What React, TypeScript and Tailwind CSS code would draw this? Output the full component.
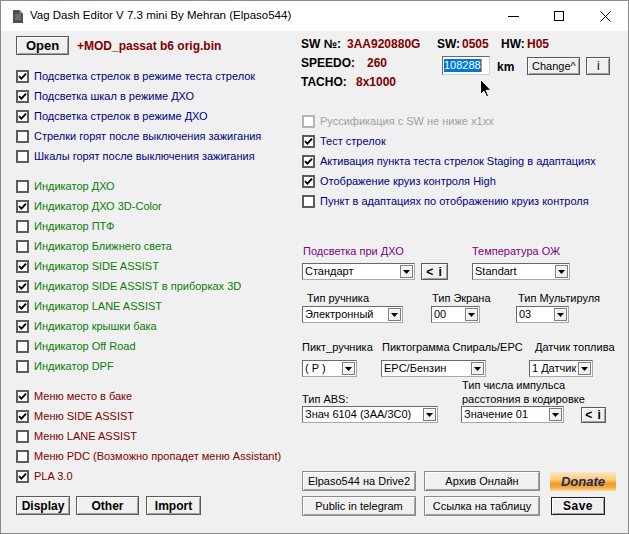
import React from "react";

const navy = "text-[#000080]";
const green = "text-[#0a7d0a]";
const red = "text-[#800000]";

function CheckMark() {
  return (
    <svg width="9" height="9" viewBox="0 0 9 9">
      <path d="M1 4.2 L3.4 6.6 L8 1.6" stroke="#000" strokeWidth="1.9" fill="none" />
    </svg>
  );
}

function Check({ checked, label, color, disabled }: { checked?: boolean; label: string; color: string; disabled?: boolean }) {
  return (
    <div className="h-[20px] flex items-center gap-[5px]">
      <div
        className={`w-[13px] h-[13px] border-2 bg-white flex items-center justify-center shrink-0 ${
          disabled ? "border-[#b4b4b4]" : "border-[#5c5c5c]"
        }`}
      >
        {checked ? <CheckMark /> : null}
      </div>
      <span className={`text-[11px] leading-none whitespace-nowrap ${color}`}>{label}</span>
    </div>
  );
}

function Btn({ children, className }: { children: React.ReactNode; className: string }) {
  return (
    <div
      className={`bg-[#f0f0f0] border border-[#5a5a5a] shadow-[inset_1px_1px_0_#ffffff,inset_-1px_-1px_0_#a0a0a0] flex items-center justify-center whitespace-nowrap ${className}`}
    >
      {children}
    </div>
  );
}

function Select({ text, className }: { text: string; className: string }) {
  return (
    <div className={`h-[17px] bg-white border border-t-[#6a6a6a] border-l-[#6a6a6a] border-r-[#a8a8a8] border-b-[#a8a8a8] flex items-center ${className}`}>
      <span className="flex-1 pl-[2px] text-[11px] text-black leading-none whitespace-nowrap overflow-hidden">{text}</span>
      <div className="w-[13px] h-[13px] mr-[1px] bg-[#f0f0f0] border border-[#7c7c7c] shadow-[inset_1px_1px_0_#ffffff] flex items-center justify-center shrink-0">
        <svg width="7" height="4" viewBox="0 0 7 4">
          <path d="M0 0H7L3.5 4Z" fill="#000" />
        </svg>
      </div>
    </div>
  );
}

function InfoBtn({ className }: { className: string }) {
  return (
    <Btn className={className}>
      <span className="text-[12px] font-bold text-black leading-none tracking-[1px]">&lt; i</span>
    </Btn>
  );
}

export default function App() {
  return (
    <div className="w-[629px] h-[534px] bg-[#f0f0f0] border border-[#8a8a8a] flex flex-col overflow-hidden relative font-['Liberation_Sans',Arial,sans-serif]">
      {/* Title bar */}
      <div className="h-[30px] bg-white flex items-center shrink-0">
        <div className="ml-[11px] w-[11px] flex items-center justify-center">
          <svg width="10" height="13" viewBox="0 0 10 13">
            <path d="M0 0H6.5L10 3.5V13H0Z" fill="#505050" />
            <path d="M6.5 0V3.5H10" fill="#8a8a8a" />
            <path d="M2 5H8M2 7H8M2 9H8" stroke="#8a8a8a" strokeWidth="1" />
          </svg>
        </div>
        <span className="ml-[7px] text-[11.5px] text-black leading-none">
          Vag Dash Editor V 7.3 mini By Mehran (Elpaso544)
        </span>
        <div className="ml-auto flex h-full">
          <div className="w-[46px] h-full flex items-center justify-center">
            <div className="w-[11px] h-[1px] bg-black" />
          </div>
          <div className="w-[46px] h-full flex items-center justify-center">
            <div className="w-[10px] h-[10px] border border-black" />
          </div>
          <div className="w-[46px] h-full flex items-center justify-center">
            <svg width="11" height="11" viewBox="0 0 11 11">
              <path d="M0.5 0.5L10.5 10.5M10.5 0.5L0.5 10.5" stroke="#000" strokeWidth="1" />
            </svg>
          </div>
        </div>
      </div>

      {/* Body */}
      <div className="flex flex-1">
        {/* Left column */}
        <div className="w-[300px] pl-[15px] pt-[5px] flex flex-col">
          <div className="flex items-center h-[19px]">
            <Btn className="w-[53px] h-[19px]">
              <span className="text-[13px] font-bold text-black leading-none">Open</span>
            </Btn>
            <span className={`ml-[8px] text-[12px] font-bold ${red} leading-none`}>+MOD_passat b6 orig.bin</span>
          </div>

          <div className="mt-[11px] flex flex-col">
            <Check checked color={navy} label="Подсветка стрелок в режиме теста стрелок" />
            <Check checked color={navy} label="Подсветка шкал в режиме ДХО" />
            <Check checked color={navy} label="Подсветка стрелок в режиме ДХО" />
            <Check color={navy} label="Стрелки горят после выключения зажигания" />
            <Check color={navy} label="Шкалы горят после выключения зажигания" />
          </div>

          <div className="mt-[10px] flex flex-col">
            <Check color={green} label="Индикатор ДХО" />
            <Check checked color={green} label="Индикатор ДХО 3D-Color" />
            <Check color={green} label="Индикатор ПТФ" />
            <Check color={green} label="Индикатор Ближнего света" />
            <Check checked color={green} label="Индикатор SIDE ASSIST" />
            <Check checked color={green} label="Индикатор SIDE ASSIST в приборках 3D" />
            <Check checked color={green} label="Индикатор LANE ASSIST" />
            <Check checked color={green} label="Индикатор крышки бака" />
            <Check color={green} label="Индикатор Off Road" />
            <Check color={green} label="Индикатор DPF" />
          </div>

          <div className="mt-[10px] flex flex-col">
            <Check checked color={red} label="Меню место в баке" />
            <Check checked color={red} label="Меню SIDE ASSIST" />
            <Check color={red} label="Меню LANE ASSIST" />
            <Check color={red} label="Меню PDC (Возможно пропадет меню Assistant)" />
            <Check checked color={red} label="PLA 3.0" />
          </div>

          <div className="mt-[10px] flex">
            <Btn className="w-[54px] h-[19px]">
              <span className="text-[12px] font-bold text-black leading-none">Display</span>
            </Btn>
            <Btn className="ml-[6px] w-[63px] h-[19px]">
              <span className="text-[12px] font-bold text-black leading-none">Other</span>
            </Btn>
            <Btn className="ml-[7px] w-[55px] h-[19px]">
              <span className="text-[12px] font-bold text-black leading-none">Import</span>
            </Btn>
          </div>
        </div>

        {/* Right column */}
        <div className="flex-1 pt-[3px] flex flex-col">
          <div className="h-[19px] flex items-center text-[12px] font-bold leading-none whitespace-nowrap">
            <span className="w-[46px] text-black">SW №:</span>
            <span className={`w-[90px] ${red}`}>3AA920880G</span>
            <span className="w-[25px] text-black">SW:</span>
            <span className={`w-[39px] ${red}`}>0505</span>
            <span className="w-[26px] text-black">HW:</span>
            <span className={red}>H05</span>
          </div>

          <div className="flex items-start">
            <div className="w-[141px] flex flex-col text-[12px] font-bold leading-none whitespace-nowrap">
              <div className="h-[19px] flex items-center">
                <span className="w-[66px] text-black">SPEEDO:</span>
                <span className={red}>260</span>
              </div>
              <div className="h-[19px] flex items-center">
                <span className="w-[55px] text-black">TACHO:</span>
                <span className={red}>8x1000</span>
              </div>
            </div>
            <div className="mt-[3px] w-[48px] h-[19px] bg-white border border-t-[#6a6a6a] border-l-[#6a6a6a] border-r-[#d0d0d0] border-b-[#d0d0d0] flex items-center pl-[1px]">
              <span className="h-[13px] bg-[#0078d7] text-white text-[11px] leading-[13px]">108288</span>
              <span className="w-[1px] h-[13px] bg-[#e08a2c]" />
            </div>
            <span className="mt-[8px] ml-[7px] text-[12px] font-bold text-black leading-none">km</span>
            <Btn className="mt-[4px] ml-[13px] w-[53px] h-[18px]">
              <span className="text-[11px] text-black leading-none">Change^</span>
            </Btn>
            <Btn className="mt-[4px] ml-[6px] w-[24px] h-[18px]">
              <span className="text-[12px] text-black leading-none">i</span>
            </Btn>
          </div>

          <div className="mt-[20px] pl-[1px] flex flex-col">
            <Check disabled color="text-[#a0a0a0]" label="Руссификация с SW не ниже x1xx" />
            <Check checked color={navy} label="Тест стрелок" />
            <Check checked color={navy} label="Активация пункта теста стрелок Staging в адаптациях" />
            <Check checked color={navy} label="Отображение круиз контроля High" />
            <Check color={navy} label="Пункт в адаптациях по отображению круиз контроля" />
          </div>

          {/* Row A */}
          <div className="mt-[34px] h-[13px] flex items-center text-[11px] leading-none text-[#800080] whitespace-nowrap">
            <span className="ml-[2px] w-[169px]">Подсветка при ДХО</span>
            <span>Температура ОЖ</span>
          </div>
          <div className="mt-[5px] flex items-center">
            <Select text="Стандарт" className="ml-[1px] w-[113px]" />
            <InfoBtn className="ml-[6px] w-[27px] h-[17px]" />
            <Select text="Standart" className="ml-[24px] w-[98px]" />
          </div>

          {/* Row B */}
          <div className="mt-[12px] h-[13px] flex items-center text-[11px] leading-none text-black whitespace-nowrap">
            <span className="ml-[6px] w-[125px]">Тип ручника</span>
            <span className="w-[86px]">Тип Экрана</span>
            <span>Тип Мультируля</span>
          </div>
          <div className="mt-[1px] flex items-center">
            <Select text="Электронный" className="ml-[1px] w-[101px]" />
            <Select text="00" className="ml-[28px] w-[49px]" />
            <Select text="03" className="ml-[36px] w-[53px]" />
          </div>

          {/* Row C */}
          <div className="mt-[18px] h-[13px] flex items-center text-[11px] leading-none text-black whitespace-nowrap">
            <span className="ml-[1px] w-[80px]">Пикт_ручника</span>
            <span className="w-[153px]">Пиктограмма Спираль/EPC</span>
            <span>Датчик топлива</span>
          </div>
          <div className="mt-[6px] flex items-center">
            <Select text="( P )" className="ml-[1px] w-[55px]" />
            <Select text="EPC/Бензин" className="ml-[24px] w-[105px]" />
            <Select text="1 Датчик" className="ml-[43px] w-[64px]" />
          </div>

          {/* Row D */}
          <div className="mt-[1px] flex items-end text-[11px] leading-[14px] text-black whitespace-nowrap">
            <span className="ml-[1px] w-[160px]">Тип ABS:</span>
            <div className="flex flex-col">
              <span>Тип числа импульса</span>
              <span>расстояния в кодировке</span>
            </div>
          </div>
          <div className="flex items-center">
            <Select text="Знач 6104 (3AA/3C0)" className="ml-[1px] w-[136px]" />
            <Select text="Значение 01" className="ml-[23px] w-[103px]" />
            <InfoBtn className="ml-[17px] w-[25px] h-[16px]" />
          </div>

          {/* Bottom buttons */}
          <div className="mt-[48px] flex items-center">
            <Btn className="ml-[1px] w-[114px] h-[20px] !border-[#8a8a8a]">
              <span className="text-[11px] text-black leading-none">Elpaso544 на Drive2</span>
            </Btn>
            <Btn className="ml-[8px] w-[116px] h-[20px] !border-[#8a8a8a]">
              <span className="text-[11px] text-black leading-none">Архив Онлайн</span>
            </Btn>
            <div className="ml-[10px] w-[66px] h-[19px] bg-[linear-gradient(to_bottom,#fde6bf_0%,#fbc97a_40%,#f29a1f_62%,#f3a83a_80%,#fbd9a2_100%)] flex items-center justify-center">
              <span className="text-[13px] font-bold italic text-[#1c2a5a] leading-none">Donate</span>
            </div>
          </div>
          <div className="mt-[5px] flex items-center">
            <Btn className="ml-[1px] w-[114px] h-[20px] !border-[#8a8a8a]">
              <span className="text-[11px] text-black leading-none">Public in telegram</span>
            </Btn>
            <Btn className="ml-[8px] w-[116px] h-[20px] !border-[#8a8a8a]">
              <span className="text-[11px] text-black leading-none">Ссылка на таблицу</span>
            </Btn>
            <Btn className="ml-[11px] w-[54px] h-[18px] !border-[#202020]">
              <span className="text-[12px] font-bold text-black leading-none tracking-[0.5px]">Save</span>
            </Btn>
          </div>
        </div>
      </div>

      {/* Mouse cursor */}
      <div className="absolute left-[479px] top-[78px] pointer-events-none">
        <svg width="12" height="19" viewBox="0 0 12 19">
          <path d="M0.5 0.5 L0.5 15.5 L4 12 L6.5 17.8 L8.6 16.9 L6.2 11.3 L11 11.3 Z" fill="#000" stroke="#fff" strokeWidth="1" />
        </svg>
      </div>
    </div>
  );
}
